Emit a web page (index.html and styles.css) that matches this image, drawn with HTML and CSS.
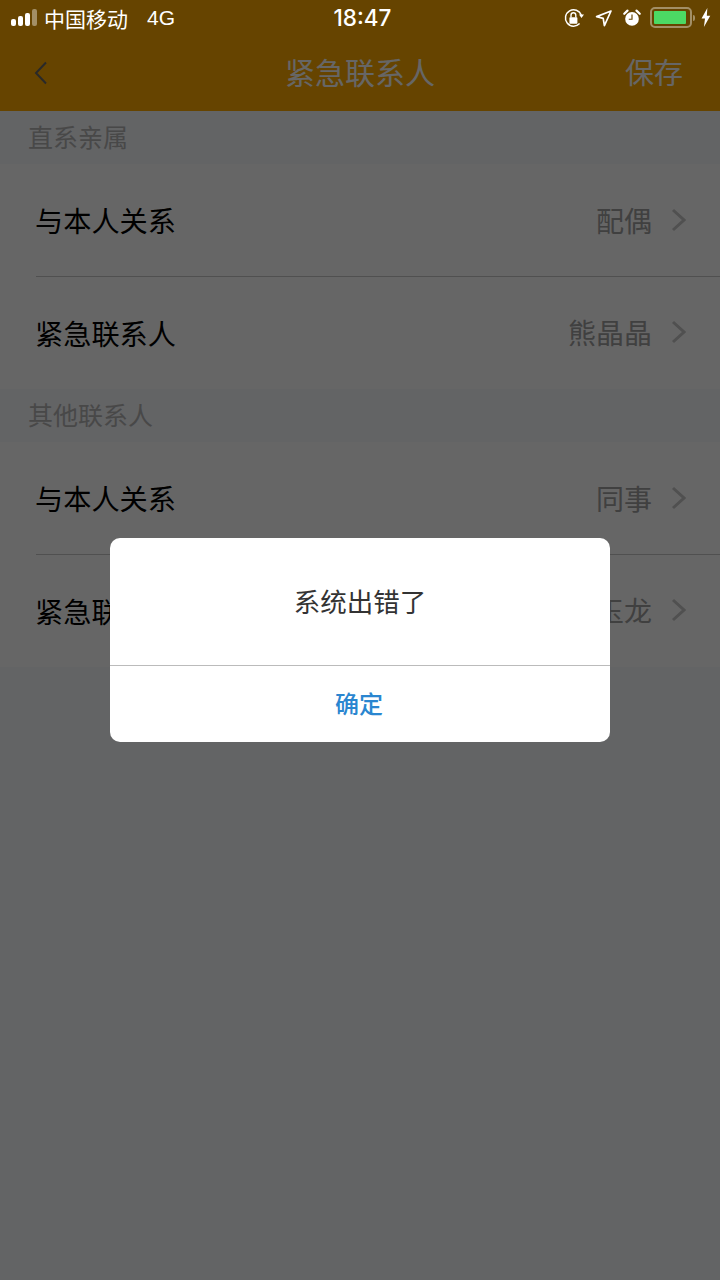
FILE: index.html
```html
<!DOCTYPE html>
<html lang="zh-CN">
<head>
  <meta charset="UTF-8" />
  <meta name="viewport" content="width=device-width, initial-scale=1.0"/>
  <title>紧急联系人</title>
  <link rel="stylesheet" href="styles.css">
</head>
<body>

<div class="status-bar">
  <div class="status-left">
    <div class="signal">
      <span class="s1"></span><span class="s2"></span><span class="s3"></span><span class="s4"></span>
    </div>
    <span class="carrier">中国移动</span>
    <span class="network">4G</span>
  </div>
  <div class="status-time">18:47</div>
  <div class="status-right">
    <svg class="icon-lock" width="20" height="20" viewBox="0 0 20 20">
      <path d="M15.6 15.6A8.2 8.2 0 1 1 17.3 7" fill="none" stroke="#fff" stroke-width="1.5"/>
      <path d="M15 6.5h5l-2.5 3.5z" fill="#fff"/>
      <path d="M7 9.4V7.2a2.4 2.4 0 0 1 4.8 0v2.2" fill="none" stroke="#fff" stroke-width="1.4"/>
      <rect x="5.4" y="9.2" width="8" height="6.6" rx="0.8" fill="#fff"/>
    </svg>
    <svg class="icon-nav" width="18" height="18" viewBox="0 0 18 18">
      <path d="M16 2L1.6 7.6 8.2 9.4 9.4 16.6z" fill="none" stroke="#fff" stroke-width="1.7" stroke-linejoin="round"/>
    </svg>
    <svg class="icon-alarm" width="18" height="18" viewBox="0 0 20 20">
      <circle cx="10" cy="11" r="7.6" fill="#fff"/>
      <path d="M1.4 5.4L5 1.8M18.6 5.4L15 1.8" stroke="#fff" stroke-width="2.4" stroke-linecap="round"/>
      <path d="M10 6.2v5.2H6.4" fill="none" stroke="#664400" stroke-width="1.3"/>
    </svg>
    <div class="battery"><div class="battery-fill"></div></div>
    <div class="battery-cap"></div>
    <svg class="icon-bolt" width="10" height="19" viewBox="0 0 11 18" preserveAspectRatio="none">
      <path d="M7 0L0.6 10h3.8L3.2 18l7-10.6H6.4z" fill="#fff"/>
    </svg>
  </div>
</div>

<header class="nav-bar">
  <svg class="back" width="16" height="26" viewBox="0 0 16 26">
    <path d="M13 2.5L3 13l10 10.5" fill="none" stroke="#666" stroke-width="2"/>
  </svg>
  <h1>紧急联系人</h1>
  <span class="save">保存</span>
</header>

<main>
  <div class="section-title">直系亲属</div>
  <div class="group">
    <div class="row">
      <span class="row-label">与本人关系</span>
      <span class="row-value">配偶</span>
      <svg class="arrow" width="15" height="24" viewBox="0 0 15 24"><path d="M2 2l11 10L2 22" /></svg>
    </div>
    <div class="row">
      <span class="row-label">紧急联系人</span>
      <span class="row-value">熊晶晶</span>
      <svg class="arrow" width="15" height="24" viewBox="0 0 15 24"><path d="M2 2l11 10L2 22" /></svg>
    </div>
  </div>

  <div class="section-title">其他联系人</div>
  <div class="group">
    <div class="row">
      <span class="row-label">与本人关系</span>
      <span class="row-value">同事</span>
      <svg class="arrow" width="15" height="24" viewBox="0 0 15 24"><path d="M2 2l11 10L2 22" /></svg>
    </div>
    <div class="row">
      <span class="row-label">紧急联系人</span>
      <span class="row-value">王玉龙</span>
      <svg class="arrow" width="15" height="24" viewBox="0 0 15 24"><path d="M2 2l11 10L2 22" /></svg>
    </div>
  </div>
</main>

<div class="overlay">
  <div class="dialog">
    <div class="dialog-msg">系统出错了</div>
    <div class="dialog-btn">确定</div>
  </div>
</div>

</body>
</html>
```

FILE: styles.css
```css
* {
  box-sizing: border-box;
  margin: 0;
  padding: 0;
}

html, body {
  height: 100%;
  font-family: "Liberation Sans", "Noto Sans CJK SC", sans-serif;
  background-color: #f8f9fd;
  color: #000;
}

body {
  overflow: hidden;
}

.status-bar {
  height: 37px;
  background: #664400;
  color: #fff;
  display: flex;
  align-items: center;
  justify-content: space-between;
  position: relative;
  z-index: 20;
  padding: 0 9px 2px 11px;
}

.status-left {
  display: flex;
  align-items: center;
  width: 243px;
}

.signal {
  display: flex;
  align-items: flex-end;
  gap: 2px;
  height: 17px;
  margin-right: 7px;
}

.signal span {
  width: 5px;
  background: #fff;
  border-radius: 2px;
}

.signal .s1 { height: 7px; }
.signal .s2 { height: 10px; }
.signal .s3 { height: 13px; }
.signal .s4 { height: 17px; background: #a38f66; }

.carrier {
  font-size: 21px;
}

.network {
  font-size: 21px;
  margin-left: 19px;
}

.status-time {
  font-family: Inter, "Liberation Sans", sans-serif;
  font-size: 22.5px;
  font-weight: 500;
}

.status-right {
  display: flex;
  align-items: center;
  width: 240px;
  justify-content: flex-end;
}

.icon-nav {
  margin-left: 11px;
}

.icon-alarm {
  margin-left: 10px;
}

.battery {
  width: 42px;
  height: 21px;
  border: 2px solid #a38f66;
  border-radius: 5px;
  padding: 2px;
  margin-left: 9px;
}

.battery-fill {
  width: 94%;
  height: 100%;
  background: #4cd964;
  border-radius: 1px;
}

.battery-cap {
  width: 2px;
  height: 6px;
  background: #a38f66;
  margin-left: 1px;
  border-radius: 0 2px 2px 0;
}

.icon-bolt {
  margin-left: 6px;
}

.nav-bar {
  height: 74px;
  background: #ffaa00;
  display: flex;
  align-items: center;
  justify-content: space-between;
  padding: 0 37px 6px 33px;
  position: relative;
}

.back {
  margin-top: 3px;
}

.nav-bar h1 {
  font-size: 30px;
  font-weight: 400;
  color: #fff;
  position: absolute;
  left: 0;
  right: 0;
  text-align: center;
}

.save {
  font-size: 29px;
  color: #fff;
}

.section-title {
  height: 53px;
  line-height: 51px;
  padding: 2px 0 0 28px;
  font-size: 25px;
  color: #b4b4b4;
}

.group {
  background: #fff;
}

.row {
  height: 112px;
  display: flex;
  align-items: center;
  padding: 0 34px 1px 35px;
  position: relative;
}

.row + .row {
  height: 113px;
}

.row + .row::before {
  content: "";
  position: absolute;
  top: 0;
  left: 36px;
  right: 0;
  height: 1px;
  background: #c8c8c8;
}

.row-label {
  font-size: 28.2px;
  flex: 1;
}

.row-value {
  font-size: 28px;
  color: #a0a0a0;
  margin-right: 18px;
}

.arrow {
  fill: none;
  stroke: #c8c8c8;
  stroke-width: 3;
  margin-left: 1px;
}

.overlay {
  position: fixed;
  top: 0;
  left: 0;
  width: 100%;
  height: 100%;
  background: rgba(0, 0, 0, 0.6);
  z-index: 10;
  display: flex;
  align-items: center;
  justify-content: center;
}

.dialog {
  width: 500px;
  height: 204px;
  background: #fff;
  border-radius: 10px;
  display: flex;
  flex-direction: column;
}

.dialog-msg {
  height: 128px;
  display: flex;
  align-items: center;
  justify-content: center;
  padding-bottom: 3px;
  font-size: 26.5px;
  color: #333;
  border-bottom: 1px solid #bbb;
}

.dialog-btn {
  flex: 1;
  display: flex;
  align-items: center;
  justify-content: center;
  padding: 0 2px 4px 0;
  font-size: 24px;
  font-weight: 500;
  color: #2a86d0;
}
```
